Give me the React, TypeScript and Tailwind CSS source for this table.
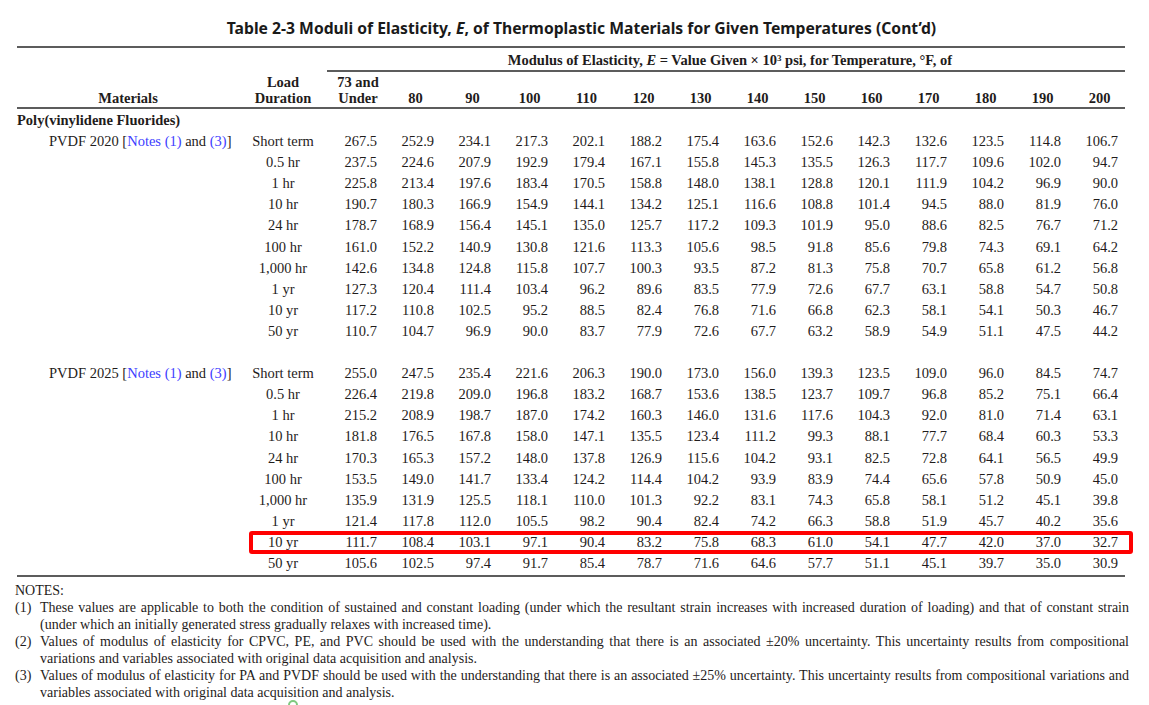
import React from "react"

const temps = ["80", "90", "100", "110", "120", "130", "140", "150", "160", "170", "180", "190", "200"]

const durations = ["Short term", "0.5 hr", "1 hr", "10 hr", "24 hr", "100 hr", "1,000 hr", "1 yr", "10 yr", "50 yr"]

const pvdf2020 = [
  "267.5 252.9 234.1 217.3 202.1 188.2 175.4 163.6 152.6 142.3 132.6 123.5 114.8 106.7",
  "237.5 224.6 207.9 192.9 179.4 167.1 155.8 145.3 135.5 126.3 117.7 109.6 102.0 94.7",
  "225.8 213.4 197.6 183.4 170.5 158.8 148.0 138.1 128.8 120.1 111.9 104.2 96.9 90.0",
  "190.7 180.3 166.9 154.9 144.1 134.2 125.1 116.6 108.8 101.4 94.5 88.0 81.9 76.0",
  "178.7 168.9 156.4 145.1 135.0 125.7 117.2 109.3 101.9 95.0 88.6 82.5 76.7 71.2",
  "161.0 152.2 140.9 130.8 121.6 113.3 105.6 98.5 91.8 85.6 79.8 74.3 69.1 64.2",
  "142.6 134.8 124.8 115.8 107.7 100.3 93.5 87.2 81.3 75.8 70.7 65.8 61.2 56.8",
  "127.3 120.4 111.4 103.4 96.2 89.6 83.5 77.9 72.6 67.7 63.1 58.8 54.7 50.8",
  "117.2 110.8 102.5 95.2 88.5 82.4 76.8 71.6 66.8 62.3 58.1 54.1 50.3 46.7",
  "110.7 104.7 96.9 90.0 83.7 77.9 72.6 67.7 63.2 58.9 54.9 51.1 47.5 44.2",
]

const pvdf2025 = [
  "255.0 247.5 235.4 221.6 206.3 190.0 173.0 156.0 139.3 123.5 109.0 96.0 84.5 74.7",
  "226.4 219.8 209.0 196.8 183.2 168.7 153.6 138.5 123.7 109.7 96.8 85.2 75.1 66.4",
  "215.2 208.9 198.7 187.0 174.2 160.3 146.0 131.6 117.6 104.3 92.0 81.0 71.4 63.1",
  "181.8 176.5 167.8 158.0 147.1 135.5 123.4 111.2 99.3 88.1 77.7 68.4 60.3 53.3",
  "170.3 165.3 157.2 148.0 137.8 126.9 115.6 104.2 93.1 82.5 72.8 64.1 56.5 49.9",
  "153.5 149.0 141.7 133.4 124.2 114.4 104.2 93.9 83.9 74.4 65.6 57.8 50.9 45.0",
  "135.9 131.9 125.5 118.1 110.0 101.3 92.2 83.1 74.3 65.8 58.1 51.2 45.1 39.8",
  "121.4 117.8 112.0 105.5 98.2 90.4 82.4 74.2 66.3 58.8 51.9 45.7 40.2 35.6",
  "111.7 108.4 103.1 97.1 90.4 83.2 75.8 68.3 61.0 54.1 47.7 42.0 37.0 32.7",
  "105.6 102.5 97.4 91.7 85.4 78.7 71.6 64.6 57.7 51.1 45.1 39.7 35.0 30.9",
]

const notes = [
  {
    n: "(1)",
    lines: [
      "These values are applicable to both the condition of sustained and constant loading (under which the resultant strain increases with increased duration of loading) and that of constant strain",
      "(under which an initially generated stress gradually relaxes with increased time).",
    ],
  },
  {
    n: "(2)",
    lines: [
      "Values of modulus of elasticity for CPVC, PE, and PVC should be used with the understanding that there is an associated ±20% uncertainty. This uncertainty results from compositional",
      "variations and variables associated with original data acquisition and analysis.",
    ],
  },
  {
    n: "(3)",
    lines: [
      "Values of modulus of elasticity for PA and PVDF should be used with the understanding that there is an associated ±25% uncertainty. This uncertainty results from compositional variations and",
      "variables associated with original data acquisition and analysis.",
    ],
  },
]

const grid = "grid grid-cols-[222px_88px_repeat(14,57px)]"

function MaterialLabel({ name }: { name: string }) {
  return (
    <span>
      {name} [<span className="text-[#4040ff]">Notes (1)</span> and{" "}
      <span className="text-[#4040ff]">(3)</span>]
    </span>
  )
}

function Group({ name, rows, highlight }: { name: string; rows: string[]; highlight?: number }) {
  return (
    <>
      {rows.map((r, i) => (
        <div key={i} className={`${grid} relative h-[21.1px] items-center`}>
          <div className="pl-[32px] whitespace-nowrap">{i === 0 ? <MaterialLabel name={name} /> : null}</div>
          <div className="text-center whitespace-nowrap">{durations[i]}</div>
          {r.split(" ").map((v, j) => (
            <div key={j} className="text-right pr-[7px]">
              {v}
            </div>
          ))}
          {highlight === i && (
            <div className="absolute left-[232px] right-[-8px] top-[-0.5px] bottom-[-1.5px] border-4 border-[#ff0000] rounded-[3px] pointer-events-none" />
          )}
        </div>
      ))}
    </>
  )
}

export default function App() {
  return (
    <div className="relative w-[1149px] h-[705px] overflow-hidden bg-white text-[#1f1c1b] font-['Liberation_Serif',serif]">
      <div className="h-[46px] pt-[17px] pl-[14px] text-center font-['Noto_Sans',sans-serif] font-bold text-[15.7px] leading-[22px] text-[#1a1a1a]">
        Table 2-3 Moduli of Elasticity, <i>E</i>, of Thermoplastic Materials for Given Temperatures (Cont’d)
      </div>

      <div className="ml-[17px] w-[1108px] text-[14.5px]">
        <div className="border-t-2 border-[#5c5c5c]" />
        <div className={`${grid} h-[22px]`}>
          <div className="col-span-2" />
          <div className="col-span-14 border-b-2 border-[#5c5c5c] text-center font-bold leading-[20px] pt-[2px] pl-[8px]">
            Modulus of Elasticity, <i>E</i> = Value Given × 10<sup className="text-[9px]">3</sup> psi, for Temperature, °F, of
          </div>
        </div>
        <div className={`${grid} h-[39px] items-end font-bold leading-[16px] border-b-2 border-[#5c5c5c] pb-[1px]`}>
          <div className="text-center">Materials</div>
          <div className="text-center">
            Load
            <br />
            Duration
          </div>
          <div className="text-center pl-[5px]">
            73 and
            <br />
            Under
          </div>
          {temps.map((t) => (
            <div key={t} className="text-center pl-[6px]">
              {t}
            </div>
          ))}
        </div>

        <div className="pt-[1px] pb-[0.5px] border-b-2 border-[#5c5c5c]">
          <div className="h-[21.1px] flex items-center font-bold">Poly(vinylidene Fluorides)</div>
          <Group name="PVDF 2020" rows={pvdf2020} />
          <div className="h-[21.1px]" />
          <Group name="PVDF 2025" rows={pvdf2025} highlight={8} />
        </div>
      </div>

      <div className="pl-[15px] pr-[20px] pt-[5px] text-[14px] leading-[17px]">
        <div>NOTES:</div>
        {notes.map((note) => (
          <div key={note.n} className="flex">
            <div className="w-[25px] shrink-0">{note.n}</div>
            <div className="flex-1">
              <div className="whitespace-nowrap text-justify [text-align-last:justify]">{note.lines[0]}</div>
              <div className="whitespace-nowrap">{note.lines[1]}</div>
            </div>
          </div>
        ))}
      </div>

      <span className="absolute left-[288px] top-[700px] w-[10px] h-[10px] rounded-full border-2 border-[#7fc97f]" />
    </div>
  )
}
